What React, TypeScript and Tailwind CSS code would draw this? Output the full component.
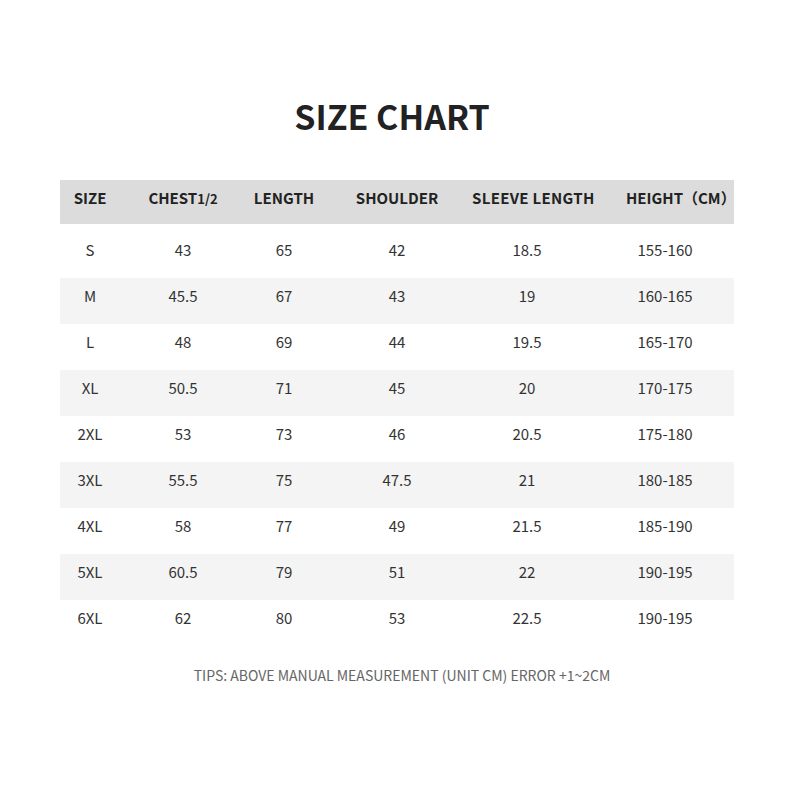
const rows = [
  ['S', '43', '65', '42', '18.5', '155-160'],
  ['M', '45.5', '67', '43', '19', '160-165'],
  ['L', '48', '69', '44', '19.5', '165-170'],
  ['XL', '50.5', '71', '45', '20', '170-175'],
  ['2XL', '53', '73', '46', '20.5', '175-180'],
  ['3XL', '55.5', '75', '47.5', '21', '180-185'],
  ['4XL', '58', '77', '49', '21.5', '185-190'],
  ['5XL', '60.5', '79', '51', '22', '190-195'],
  ['6XL', '62', '80', '53', '22.5', '190-195'],
];

const grid = 'grid grid-cols-[60px_126px_76px_150px_110px_152px] items-center';

export default function App() {
  return (
    <div
      className="w-[800px] h-[800px] bg-white flex flex-col items-center"
      style={{ fontFamily: '"Noto Sans CJK SC", "Noto Sans", sans-serif' }}
    >
      <h1 className="mt-[94px] text-[34px] leading-[44px] font-bold text-[#222] ml-[-16px]">SIZE CHART</h1>

      <div className="mt-[42px] w-[674px] ml-[-6px]">
        <div className={`${grid} h-[44px] pb-[7px] bg-[#dcdcdc] text-[15px] font-bold text-[#222] whitespace-nowrap`}>
          <div className="text-center">SIZE</div>
          <div className="text-center">
            CHEST<span className="text-[13px] font-semibold">1/2</span>
          </div>
          <div className="text-center">LENGTH</div>
          <div className="text-center">SHOULDER</div>
          <div className="text-center tracking-[0.3px]">SLEEVE LENGTH</div>
          <div className="text-center pl-[44px]">HEIGHT（CM）</div>
        </div>

        <div className="mt-[8px]">
          {rows.map((r, i) => (
            <div
              key={r[0]}
              className={`${grid} h-[46px] pb-[9px] text-[15px] text-[#333] ${i % 2 === 1 ? 'bg-[#f4f4f4]' : ''}`}
            >
              {r.map((c, j) => (
                <div key={j} className={`text-center ${j === 5 ? 'pl-[14px]' : ''}`}>
                  {c}
                </div>
              ))}
            </div>
          ))}
        </div>
      </div>

      <p className="mt-[19px] text-[14px] text-[#666] ml-[4px]">
        TIPS: ABOVE MANUAL MEASUREMENT (UNIT CM) ERROR +1~2CM
      </p>
    </div>
  );
}
